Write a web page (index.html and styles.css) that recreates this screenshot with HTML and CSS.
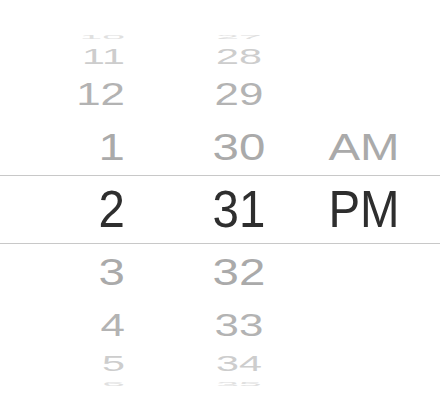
FILE: index.html
```html
<!DOCTYPE html>
<html lang="en">
<head>
    <meta charset="UTF-8">
    <meta name="viewport" content="width=device-width, initial-scale=1.0">
    <title>Time Picker</title>
    <link rel="stylesheet" href="styles.css">
</head>
<body>
    <div class="picker">
        <div class="row d4">
            <span class="hour">10</span>
            <span class="minute">27</span>
            <span class="meridiem"></span>
        </div>
        <div class="row d3">
            <span class="hour">11</span>
            <span class="minute">28</span>
            <span class="meridiem"></span>
        </div>
        <div class="row d2">
            <span class="hour">12</span>
            <span class="minute">29</span>
            <span class="meridiem"></span>
        </div>
        <div class="row d1">
            <span class="hour">1</span>
            <span class="minute">30</span>
            <span class="meridiem">AM</span>
        </div>
        <div class="row d0 selected">
            <span class="hour">2</span>
            <span class="minute">31</span>
            <span class="meridiem">PM</span>
        </div>
        <div class="row d1">
            <span class="hour">3</span>
            <span class="minute">32</span>
            <span class="meridiem"></span>
        </div>
        <div class="row d2">
            <span class="hour">4</span>
            <span class="minute">33</span>
            <span class="meridiem"></span>
        </div>
        <div class="row d3">
            <span class="hour">5</span>
            <span class="minute">34</span>
            <span class="meridiem"></span>
        </div>
        <div class="row d4">
            <span class="hour">6</span>
            <span class="minute">35</span>
            <span class="meridiem"></span>
        </div>
    </div>
</body>
</html>
```

FILE: styles.css
```css
body {
    margin: 0;
    background-color: #fff;
    font-family: "Liberation Sans", Arial, sans-serif;
}
.picker {
    padding-top: 29px;
    width: 440px;
    overflow: hidden;
}
.row {
    --sx: 0.93;
    --sy: 1;
    display: flex;
    align-items: center;
    box-sizing: border-box;
    font-size: 51px;
    white-space: nowrap;
}
.row span {
    display: block;
    transform: scale(var(--sx), var(--sy));
}
.hour {
    width: 125px;
    text-align: right;
    transform-origin: right center;
}
.minute {
    width: 112px;
    margin-left: 58px;
    text-align: center;
}
.meridiem {
    width: 138px;
    text-align: center;
}

/* rows further from the middle are squashed like a turning wheel */
.d0 {
    height: 69px;
    color: #2e2e2e;
}
.selected {
    border-top: 1px solid #c8c8c8;
    border-bottom: 1px solid #c8c8c8;
}
.d1 {
    --sy: 0.73;
    height: 56px;
    color: #aaa;
}
.d2 {
    --sx: 0.86;
    --sy: 0.6;
    height: 50px;
    color: #b3b3b3;
}
.d3 {
    --sx: 0.81;
    --sy: 0.42;
    height: 26px;
    color: #cdcdcd;
}
.d4 {
    --sx: 0.8;
    --sy: 0.12;
    height: 14px;
    color: #e0e0e0;
}
```
